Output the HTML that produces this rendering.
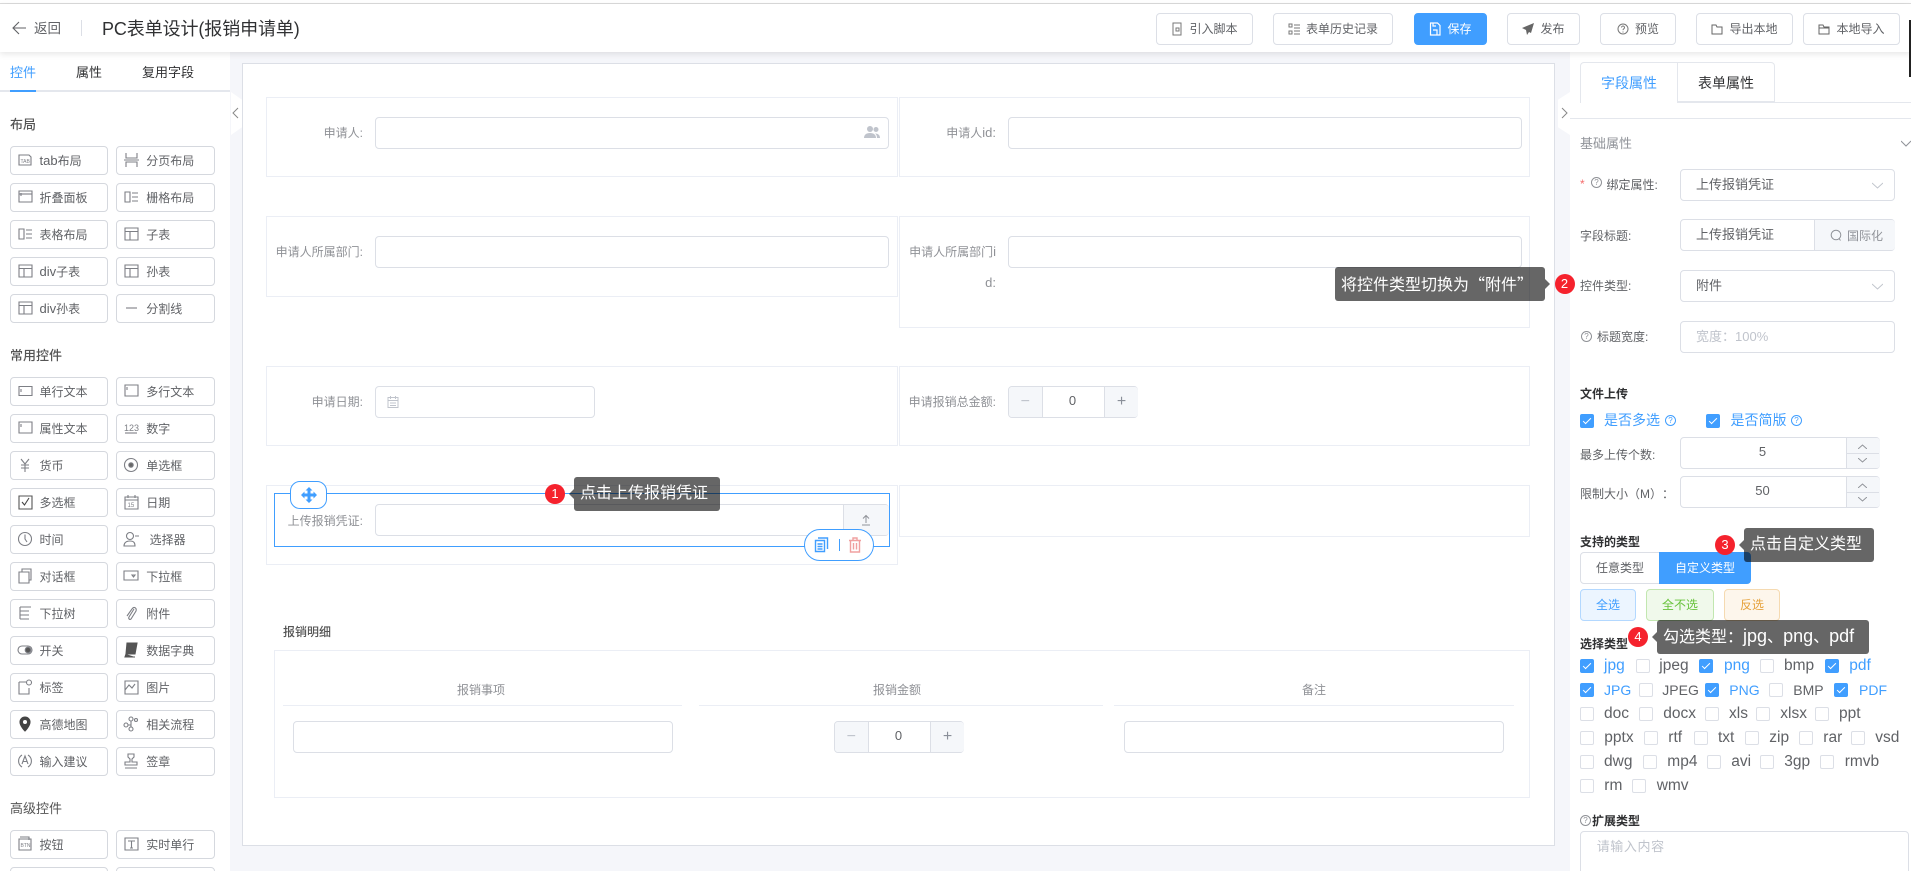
<!DOCTYPE html>
<html lang="zh-CN"><head><meta charset="utf-8"><title>PC表单设计</title>
<style>
html{margin:0;padding:0;width:1911px;height:871px;overflow:hidden}
body{margin:0;padding:0;width:1911px;height:871px;overflow:hidden;position:relative;background:#f5f6fa;font-family:"Liberation Sans","Noto Sans CJK SC",sans-serif;font-size:12px;color:#606266;text-spacing-trim:space-all}
.a,.t,.i,.b,.c,.g,.tip,.bd,.h,svg.s{position:absolute}
.t{white-space:nowrap;line-height:16px}
.i{border:1px solid #dcdfe6;border-radius:4px;background:#fff;box-sizing:border-box}
.cell{position:absolute;border:1px solid #ebeef5;box-sizing:border-box}
.g{height:31.4px;border:1px solid #dcdfe6;border-radius:4px;background:#fff;box-sizing:border-box;display:flex;align-items:center;justify-content:center;color:#606266;white-space:nowrap}
.g svg{margin-right:6px;flex:none}
.b{width:98.4px;height:29px;border:1px solid #d5d8de;border-radius:4px;background:#fff;box-sizing:border-box;color:#606266;line-height:28px;padding-left:29px;white-space:nowrap}
.b svg{position:absolute;left:6px;top:5px;width:16px;height:16px;fill:none;stroke:#7d7f85;stroke-width:1.1}
.b svg text{stroke:none;fill:#7d7f85}
.c1{left:9.5px}.c2{left:116.3px}
.sec{left:10px;color:#555;font-size:13px}
.lb{color:#8f9196;text-align:right}
.pl{color:#606266;font-size:13px}
.l{font-size:13px}
.c{width:14px;height:14px;border:1px solid #dcdfe6;border-radius:2px;background:#fff;box-sizing:border-box}
.c.on{background:#409eff;border-color:#409eff}
.c.on::after{content:"";position:absolute;left:4px;top:1px;width:3px;height:7px;border:solid #fff;border-width:0 1px 1px 0;transform:rotate(45deg)}
.k{font-size:15.5px;color:#606266}.k.on{color:#409eff}.k.u{font-size:14px}
.h{border:1px solid #8f9196;border-radius:50%;box-sizing:border-box;width:11px;height:11px;font-size:8px;line-height:9px;text-align:center;color:#8f9196}
.tip{background:rgba(0,0,0,.6);color:#fff;border-radius:3px;height:34px;line-height:33px;font-size:16px;box-sizing:border-box;padding-left:6px;white-space:nowrap}
.tip::before{content:"";position:absolute;left:-5px;top:12px;border:5px solid transparent;border-left:0;border-right-color:rgba(0,0,0,.6)}
.tip.r::before{left:auto;right:-5px;border-left:5px solid rgba(0,0,0,.6);border-right:0}
.q{font-family:"Noto Sans CJK SC",sans-serif}
.bd{width:20px;height:20px;border-radius:50%;background:#f5222d;color:#fff;font-size:13px;line-height:20px;text-align:center}
svg.ar{position:absolute;fill:none;stroke:#c0c4cc;stroke-width:1}
</style></head><body>
<svg width="0" height="0" style="position:absolute"><defs>
<symbol id="tbl" viewBox="0 0 16 16"><path d="M2 2h13v12H2zM2 5.5h13M7 5.5V14"/></symbol>
<symbol id="gr" viewBox="0 0 16 16"><path d="M2 3h5v10H2zM9 4h6M9 8h6M9 12h6"/></symbol>
<symbol id="inp" viewBox="0 0 16 16"><path d="M2 3.500h13v9H2zM4 6v3"/></symbol>
<symbol id="ml" viewBox="0 0 16 16"><path d="M2 2h13v11H2zM4 4v3"/></symbol>
</defs></svg>

<!-- header -->
<div class="a" style="left:0;top:0;width:1911px;height:4px;background:#fff;border-bottom:1px solid #dcdcdc;box-sizing:border-box"></div>
<div class="a" style="left:0;top:4px;width:1911px;height:48px;background:#fff;box-shadow:0 2px 6px rgba(0,0,0,.1);z-index:3">
<svg class="s" style="left:12px;top:17px" width="15" height="14" fill="none" stroke="#606266" stroke-width="1.1"><path d="M14 7H1M7 1L1 7l6 6"/></svg>
<span class="t" style="left:34px;top:17px;font-size:13.500px;color:#606266">返回</span>
<div class="a" style="left:81px;top:16px;width:1px;height:16px;background:#dcdfe6"></div>
<span class="t" style="left:102px;top:15px;font-size:18px;line-height:20px;letter-spacing:-.1px;color:#303133">PC表单设计(报销申请单)</span>
<div class="g" style="left:1156px;top:9.300px;width:97px"><svg width="12" height="14" fill="none" stroke="#777"><path d="M2 1h8v12H2zM5 6h3v3H5z"/></svg>引入脚本</div>
<div class="g" style="left:1273px;top:9.300px;width:120px"><svg width="12" height="12" fill="none" stroke="#777"><path d="M1 1h3v3H1zM1 8h3v3H1zM6 2h6M6 5h6M6 8h6M6 11h6"/></svg>表单历史记录</div>
<div class="g" style="left:1414px;top:9.300px;width:73px;background:#409eff;border-color:#409eff;color:#fff"><svg width="12" height="14" fill="none" stroke="#fff" stroke-width="1.2"><path d="M1.500 1h7l2.500 2.500V13h-9.500zM4 8h4v5M4 1v3h3"/></svg>保存</div>
<div class="g" style="left:1507px;top:9.300px;width:73px"><svg width="12" height="12" fill="#666"><path d="M12 0L0 5l4 2 1 5 2-3 2 1z"/></svg>发布</div>
<div class="g" style="left:1600px;top:9.300px;width:76px"><svg width="12" height="12" fill="none" stroke="#777"><circle cx="6" cy="6" r="5"/><path d="M4.500 4.500a1.500 1.500 0 1 1 2.300 1.300c-.6.400-.8.700-.8 1.300M6 8.500v1"/></svg>预览</div>
<div class="g" style="left:1696px;top:9.300px;width:97px"><svg width="12" height="12" fill="none" stroke="#666"><path d="M1 2h4l1 2h5v7H1z"/></svg>导出本地</div>
<div class="g" style="left:1803px;top:9.300px;width:97px"><svg width="12" height="12" fill="none" stroke="#666"><path d="M1 2h4l1 2h5v7H1zM1 5h10"/></svg>本地导入</div>
</div>
<div class="a" style="left:1909px;top:20px;width:2px;height:57px;background:#222;z-index:4"></div>

<!-- left panel -->
<div class="a" style="left:0;top:52px;width:230px;height:819px;background:#fff"></div>
<span class="t" style="left:10px;top:65px;font-size:13px;color:#409eff">控件</span>
<span class="t" style="left:76px;top:65px;font-size:13px;color:#303133">属性</span>
<span class="t" style="left:142px;top:65px;font-size:13px;color:#303133">复用字段</span>
<div class="a" style="left:0;top:90px;width:230px;height:2px;background:#e4e7ed"></div>
<div class="a" style="left:10px;top:90px;width:26px;height:2px;background:#409eff"></div>
<span class="t sec" style="top:117px;font-weight:500">布局</span>
<span class="t sec" style="top:348px;font-weight:500">常用控件</span>
<span class="t sec" style="top:801px">高级控件</span>

<div class="b c1" style="top:146px"><svg viewBox="0 0 16 16"><path d="M2 3h10l2 2v8H2z"/><text x="3.500" y="11" font-size="5">TAB</text></svg><span class="l">tab</span>布局</div>
<div class="b c2" style="top:146px"><svg viewBox="0 0 16 16"><path d="M3 1v5h11V1M3 15v-5h11v5M1 8h15"/></svg>分页布局</div>
<div class="b c1" style="top:183px"><svg><use href="#ml"/><path d="M2 5h13"/></svg>折叠面板</div>
<div class="b c2" style="top:183px"><svg><use href="#gr"/></svg>栅格布局</div>
<div class="b c1" style="top:220px"><svg><use href="#gr"/></svg>表格布局</div>
<div class="b c2" style="top:220px"><svg><use href="#tbl"/></svg>子表</div>
<div class="b c1" style="top:257px"><svg><use href="#tbl"/></svg><span class="l">div</span>子表</div>
<div class="b c2" style="top:257px"><svg><use href="#tbl"/></svg>孙表</div>
<div class="b c1" style="top:294px"><svg><use href="#tbl"/></svg><span class="l">div</span>孙表</div>
<div class="b c2" style="top:294px"><svg viewBox="0 0 16 16"><path d="M3 8h11"/></svg>分割线</div>

<div class="b c1" style="top:377px"><svg><use href="#inp"/></svg>单行文本</div>
<div class="b c2" style="top:377px"><svg><use href="#ml"/></svg>多行文本</div>
<div class="b c1" style="top:414px"><svg><use href="#ml"/></svg>属性文本</div>
<div class="b c2" style="top:414px"><svg viewBox="0 0 16 16"><text x="1" y="11" font-size="9">123</text><path d="M2 13h12"/></svg>数字</div>
<div class="b c1" style="top:451px"><svg viewBox="0 0 16 16"><path d="M4 2l4 5 4-5M8 7v8M4 8h8M4 11h8"/></svg>货币</div>
<div class="b c2" style="top:451px"><svg viewBox="0 0 16 16"><circle cx="8" cy="8" r="6.500"/><circle cx="8" cy="8" r="2.200" fill="#666"/></svg>单选框</div>
<div class="b c1" style="top:488px"><svg viewBox="0 0 16 16"><path d="M2 2h13v13H2z" stroke="#555"/><path d="M5 8l2.500 3L12 4" stroke="#444"/></svg>多选框</div>
<div class="b c2" style="top:488px"><svg viewBox="0 0 16 16"><path d="M2 3h13v12H2zM2 6h13M5 1v3M12 1v3"/><text x="4.500" y="13" font-size="6">15</text></svg>日期</div>
<div class="b c1" style="top:525px"><svg viewBox="0 0 16 16"><circle cx="8" cy="8" r="6.500"/><path d="M8 3.500V8l2 3"/></svg>时间</div>
<div class="b c2" style="top:525px"><svg viewBox="0 0 16 16"><circle cx="7" cy="5" r="3.500"/><path d="M1 15c0-3 2-5 6-5s5 2 5 5zM12 5h4"/></svg>&nbsp;选择器</div>
<div class="b c1" style="top:562px"><svg viewBox="0 0 16 16"><path d="M2 4h10v11H2zM5 4V1h9v11h-2"/></svg>对话框</div>
<div class="b c2" style="top:562px"><svg viewBox="0 0 16 16"><path d="M1 3h14v9H1zM9 7h3l-1.500 2z"/></svg>下拉框</div>
<div class="b c1" style="top:599px"><svg viewBox="0 0 16 16"><path d="M3 2h11M3 2v12M3 6h9M3 10h9M3 14h9"/></svg>下拉树</div>
<div class="b c2" style="top:599px"><svg viewBox="0 0 16 16"><path d="M11 4l-5 8c-1 2 1 3 2 2l5-8c1-3-2-5-4-2L4 11"/></svg>附件</div>
<div class="b c1" style="top:636px"><svg viewBox="0 0 16 16"><rect x="1" y="4" width="14" height="8" rx="4"/><circle cx="11" cy="8" r="2.800" fill="#555"/></svg>开关</div>
<div class="b c2" style="top:636px"><svg viewBox="0 0 16 16"><path d="M4 1h10l-2 11H3zM3 12l-1 3h10" fill="#555" stroke="#555"/></svg>数据字典</div>
<div class="b c1" style="top:673px"><svg viewBox="0 0 16 16"><path d="M2 3h7M2 3v12h10V9"/><circle cx="12" cy="3.500" r="2.500"/></svg>标签</div>
<div class="b c2" style="top:673px"><svg viewBox="0 0 16 16"><path d="M2 2h13v13H2zM2 11l4-5 3 3 3-4"/></svg>图片</div>
<div class="b c1" style="top:710px"><svg viewBox="0 0 16 16"><path d="M8 1a5 5 0 0 1 5 5c0 4-5 9-5 9S3 10 3 6a5 5 0 0 1 5-5z" fill="#444" stroke="#444"/><circle cx="8" cy="6" r="2" fill="#fff" stroke="none"/></svg>高德地图</div>
<div class="b c2" style="top:710px"><svg viewBox="0 0 16 16"><circle cx="8" cy="3" r="2"/><circle cx="3" cy="9" r="2"/><circle cx="8" cy="13" r="2"/><circle cx="13" cy="4" r="1.500"/><path d="M8 5v6M5 9h3"/></svg>相关流程</div>
<div class="b c1" style="top:747px"><svg viewBox="0 0 16 16"><path d="M5 2a7 7 0 0 0 0 12M11 2a7 7 0 0 1 0 12M5 11l3-8 3 8M6 8.500h4"/></svg>输入建议</div>
<div class="b c2" style="top:747px"><svg viewBox="0 0 16 16"><path d="M5 1h6v3l-2 2v3h5v3H2V9h5V6L5 4zM2 15h12"/></svg>签章</div>
<div class="b c1" style="top:830px"><svg viewBox="0 0 16 16"><path d="M3 1h9v3M2 3h12v11H2z"/><text x="3.500" y="11" font-size="5">BTN</text></svg>按钮</div>
<div class="b c2" style="top:830px"><svg viewBox="0 0 16 16"><path d="M2 2h13v12H2zM5 5h7M8.500 5v7M7 12h3"/></svg>实时单行</div>
<div class="b c1" style="top:867px"></div><div class="b c2" style="top:867px"></div>

<!-- collapse handles -->
<div class="a" style="left:231px;top:92px;width:11px;height:43px;background:#fff;clip-path:polygon(0 0,100% 18%,100% 82%,0 100%)"></div>
<svg class="ar" style="left:232px;top:107px;stroke:#888" width="7" height="12"><path d="M6 1L1 6l5 5"/></svg>
<div class="a" style="left:1558px;top:92px;width:12px;height:43px;background:#fff;clip-path:polygon(0 18%,100% 0,100% 100%,0 82%)"></div>
<svg class="ar" style="left:1561px;top:107px;stroke:#888" width="7" height="12"><path d="M1 1l5 5-5 5"/></svg>

<!-- canvas -->
<div class="a" style="left:242px;top:63px;width:1313px;height:783px;background:#fff;border:1px solid #dcdfe6;box-sizing:border-box"></div>
<div class="cell" style="left:266px;top:97px;width:632px;height:80px"></div>
<div class="cell" style="left:899px;top:97px;width:631px;height:80px"></div>
<div class="cell" style="left:266px;top:216px;width:632px;height:81px"></div>
<div class="cell" style="left:899px;top:216px;width:631px;height:112px"></div>
<div class="cell" style="left:266px;top:366px;width:632px;height:80px"></div>
<div class="cell" style="left:899px;top:366px;width:631px;height:80px"></div>
<div class="cell" style="left:266px;top:485px;width:632px;height:79.500px"></div>
<div class="cell" style="left:899px;top:485px;width:631px;height:51.500px"></div>

<span class="t lb" style="left:250px;top:125px;width:113px">申请人:</span>
<div class="i" style="left:375px;top:117.300px;width:514px;height:31.400px"></div>
<svg class="s" style="left:864px;top:125px" width="16" height="14" fill="#c0c4cc"><circle cx="6" cy="4" r="3"/><circle cx="12" cy="4.500" r="2.500"/><path d="M0 13c0-3 2-5 6-5s6 2 6 5zM13 13c0-2-.5-3.500-2-4.500 3 0 5 1.500 5 4.500z"/></svg>
<span class="t lb" style="left:882px;top:125px;width:114px">申请人<span class="l">id:</span></span>
<div class="i" style="left:1008px;top:117.300px;width:514px;height:31.400px"></div>

<span class="t lb" style="left:250px;top:244px;width:113px">申请人所属部门:</span>
<div class="i" style="left:375px;top:236.300px;width:514px;height:31.400px"></div>
<span class="t lb" style="left:882px;top:244px;width:114px">申请人所属部门<span class="l">i</span></span>
<span class="t lb" style="left:882px;top:275px;width:114px"><span class="l">d:</span></span>
<div class="i" style="left:1008px;top:236.300px;width:514px;height:31.400px"></div>

<span class="t lb" style="left:250px;top:394px;width:113px">申请日期:</span>
<div class="i" style="left:375px;top:386.400px;width:220px;height:31.400px"></div>
<svg class="s" style="left:387px;top:395px" width="12" height="13" fill="none" stroke="#c0c4cc"><path d="M1 2.500h10v10H1zM1 5.500h10M3.500 1v3M8.500 1v3M3 8h6M3 10.500h6"/></svg>
<span class="t lb" style="left:882px;top:394px;width:114px">申请报销总金额:</span>
<div class="i" style="left:1008px;top:386.400px;width:130px;height:31.400px"></div>
<div class="a" style="left:1009px;top:387.400px;width:32.500px;height:29.400px;background:#f5f7fa;border-right:1px solid #dcdfe6;border-radius:3px 0 0 3px;color:#c0c4cc;font-size:16px;line-height:29px;text-align:center">−</div>
<div class="a" style="left:1104px;top:387.400px;width:33px;height:29.400px;background:#f5f7fa;border-left:1px solid #dcdfe6;border-radius:0 3px 3px 0;color:#8a8f99;font-size:16px;line-height:29px;text-align:center">+</div>
<span class="t" style="left:1041.500px;top:393px;width:62px;text-align:center;font-size:13px;color:#606266">0</span>

<!-- selected field -->
<div class="a" style="left:274.400px;top:493.300px;width:616px;height:53.500px;border:1px solid #409eff;box-sizing:border-box"></div>
<span class="t lb" style="left:250px;top:513px;width:113px">上传报销凭证:</span>
<div class="i" style="left:375px;top:504.300px;width:514px;height:31.400px"></div>
<div class="a" style="left:843px;top:505.300px;width:45px;height:29.400px;background:#f5f7fa;border-left:1px solid #dcdfe6;border-radius:0 3px 3px 0"></div>
<svg class="s" style="left:860px;top:514px" width="12" height="12" fill="none" stroke="#909399"><path d="M6 9V2M3 4.500L6 1.500l3 3M2 11h8"/></svg>
<div class="a" style="left:290.400px;top:481.300px;width:37px;height:27.500px;background:#fff;border:1px solid #409eff;border-radius:10px;box-sizing:border-box"></div>
<svg class="s" style="left:301px;top:487px" width="16" height="16" fill="#409eff"><path d="M8 0l3.500 3.500H9.500v3h3V4.500L16 8l-3.500 3.500V9.500h-3v3h2L8 16l-3.500-3.500h2v-3h-3v2L0 8l3.500-3.500v2h3v-3h-2z"/></svg>
<div class="a" style="left:804px;top:529.300px;width:70px;height:31.400px;background:#fff;border:1px solid #409eff;border-radius:16px;box-sizing:border-box"></div>
<svg class="s" style="left:814px;top:537px" width="15" height="16" fill="none" stroke="#409eff" stroke-width="1.400"><path d="M1.500 3.500h9v11h-9zM4 1h9.500v11M3.500 7h5M3.500 9.500h5M3.500 12h5"/></svg>
<div class="a" style="left:839px;top:539px;width:1px;height:12px;background:#409eff"></div>
<svg class="s" style="left:848px;top:537px" width="14" height="16" fill="none" stroke="#f0a0a0" stroke-width="1.400"><path d="M1 3.500h12M5 3.500V1h4v2.500M2.500 3.500v11.500h9V3.500M5.500 6v6.500M8.500 6v6.500"/></svg>

<!-- detail table -->
<span class="t" style="left:283px;top:624px;color:#555;font-weight:500">报销明细</span>
<div class="cell" style="left:274px;top:650.300px;width:1256px;height:148px"></div>
<span class="t lb" style="left:283px;top:682px;width:396px;text-align:center">报销事项</span>
<span class="t lb" style="left:699px;top:682px;width:396px;text-align:center">报销金额</span>
<span class="t lb" style="left:1114px;top:682px;width:400px;text-align:center">备注</span>
<div class="a" style="left:283px;top:705px;width:399.400px;height:1px;background:#ebeef5"></div>
<div class="a" style="left:699px;top:705px;width:404px;height:1px;background:#ebeef5"></div>
<div class="a" style="left:1114px;top:705px;width:400px;height:1px;background:#ebeef5"></div>
<div class="i" style="left:293px;top:721.300px;width:380px;height:31.400px"></div>
<div class="i" style="left:1124px;top:721.300px;width:380px;height:31.400px"></div>
<div class="i" style="left:834px;top:721.300px;width:130px;height:31.400px"></div>
<div class="a" style="left:835px;top:722.300px;width:32.500px;height:29.400px;background:#f5f7fa;border-right:1px solid #dcdfe6;border-radius:3px 0 0 3px;color:#c0c4cc;font-size:16px;line-height:29px;text-align:center">−</div>
<div class="a" style="left:930px;top:722.300px;width:33px;height:29.400px;background:#f5f7fa;border-left:1px solid #dcdfe6;border-radius:0 3px 3px 0;color:#8a8f99;font-size:16px;line-height:29px;text-align:center">+</div>
<span class="t" style="left:867.500px;top:728px;width:62px;text-align:center;font-size:13px;color:#606266">0</span>

<!-- right panel -->
<div class="a" style="left:1570px;top:52px;width:341px;height:819px;background:#fff"></div>
<div class="a" style="left:1580px;top:62.300px;width:98px;height:41px;border:1px solid #e4e7ed;border-bottom:0;border-radius:4px 0 0 0;box-sizing:border-box;background:#fff"></div>
<div class="a" style="left:1678px;top:62.300px;width:97px;height:40px;border:1px solid #e4e7ed;border-left:0;border-radius:0 4px 0 0;box-sizing:border-box"></div>
<div class="a" style="left:1678px;top:102px;width:233px;height:1px;background:#e4e7ed"></div>
<div class="a" style="left:1570px;top:118px;width:341px;height:1px;background:#e4e7ed"></div>
<span class="t" style="left:1601px;top:75px;font-size:14px;color:#409eff">字段属性</span>
<span class="t" style="left:1698px;top:75px;font-size:14px;color:#303133">表单属性</span>
<span class="t" style="left:1580px;top:136px;font-size:13px;color:#909399">基础属性</span>
<svg class="ar" style="left:1901px;top:140px;stroke:#909399" width="10" height="7"><path d="M0 1l5 5 5-5"/></svg>

<span class="t" style="left:1580px;top:176px;color:#f56c6c">*</span>
<span class="h" style="left:1591px;top:177px">?</span>
<span class="t" style="left:1606.500px;top:177px;color:#606266">绑定属性:</span>
<div class="i" style="left:1680.400px;top:169.300px;width:214.200px;height:31.400px"></div>
<span class="t pl" style="left:1696px;top:177px">上传报销凭证</span>
<svg class="ar" style="left:1872px;top:182px" width="11" height="7"><path d="M0 1l5.500 5L11 1"/></svg>

<span class="t" style="left:1580px;top:228px;color:#606266">字段标题:</span>
<div class="i" style="left:1680.400px;top:219.300px;width:214.200px;height:31.400px"></div>
<div class="a" style="left:1814px;top:220.300px;width:79.600px;height:29.400px;background:#f5f7fa;border-left:1px solid #dcdfe6;border-radius:0 3px 3px 0"></div>
<span class="t pl" style="left:1696px;top:227px">上传报销凭证</span>
<svg class="s" style="left:1830px;top:229px" width="12" height="13" fill="none" stroke="#909399"><circle cx="6" cy="6" r="4.800"/><path d="M9 9.500l1.500 2"/></svg>
<span class="t" style="left:1847px;top:228px;color:#909399">国际化</span>

<span class="t" style="left:1580px;top:278px;color:#606266">控件类型:</span>
<div class="i" style="left:1680.400px;top:270.300px;width:214.200px;height:31.400px"></div>
<span class="t pl" style="left:1696px;top:278px">附件</span>
<svg class="ar" style="left:1872px;top:283px" width="11" height="7"><path d="M0 1l5.500 5L11 1"/></svg>

<span class="h" style="left:1581px;top:331px">?</span>
<span class="t" style="left:1597px;top:329px;color:#606266">标题宽度:</span>
<div class="i" style="left:1680.400px;top:321.300px;width:214.200px;height:31.400px"></div>
<span class="t" style="left:1696px;top:329px;font-size:13px;color:#c0c4cc">宽度：100%</span>

<span class="t" style="left:1580px;top:386px;font-weight:700;color:#303133">文件上传</span>
<div class="c on" style="left:1580px;top:414px"></div>
<span class="t" style="left:1604px;top:412px;font-size:14px;color:#409eff">是否多选</span>
<span class="h" style="left:1665px;top:415px;border-color:#409eff;color:#409eff">?</span>
<div class="c on" style="left:1706px;top:414px"></div>
<span class="t" style="left:1730.500px;top:412px;font-size:14px;color:#409eff">是否简版</span>
<span class="h" style="left:1791px;top:415px;border-color:#409eff;color:#409eff">?</span>

<span class="t" style="left:1580px;top:447px;color:#606266">最多上传个数:</span>
<div class="i" style="left:1680.300px;top:437.300px;width:199.400px;height:31.400px"></div>
<div class="a" style="left:1846.300px;top:438.300px;width:32.400px;height:29.400px;background:#f5f7fa;border-left:1px solid #dcdfe6;border-radius:0 3px 3px 0"></div>
<div class="a" style="left:1847px;top:453px;width:32px;height:1px;background:#dcdfe6"></div>
<svg class="ar" style="left:1858px;top:444px;stroke:#909399" width="9" height="5"><path d="M0 5l4.500-4L9 5"/></svg>
<svg class="ar" style="left:1858px;top:458px;stroke:#909399" width="9" height="5"><path d="M0 0l4.500 4L9 0"/></svg>
<span class="t" style="left:1680px;top:444px;width:165px;text-align:center;font-size:13px;color:#606266">5</span>

<span class="t" style="left:1580px;top:486px;color:#606266">限制大小（M）：</span>
<div class="i" style="left:1680.300px;top:476.300px;width:199.400px;height:31.400px"></div>
<div class="a" style="left:1846.300px;top:477.300px;width:32.400px;height:29.400px;background:#f5f7fa;border-left:1px solid #dcdfe6;border-radius:0 3px 3px 0"></div>
<div class="a" style="left:1847px;top:492px;width:32px;height:1px;background:#dcdfe6"></div>
<svg class="ar" style="left:1858px;top:483px;stroke:#909399" width="9" height="5"><path d="M0 5l4.500-4L9 5"/></svg>
<svg class="ar" style="left:1858px;top:497px;stroke:#909399" width="9" height="5"><path d="M0 0l4.500 4L9 0"/></svg>
<span class="t" style="left:1680px;top:483px;width:165px;text-align:center;font-size:13px;color:#606266">50</span>

<span class="t" style="left:1580px;top:534px;font-weight:700;color:#303133">支持的类型</span>
<div class="g" style="left:1580px;top:552.300px;width:80px;border-radius:4px 0 0 4px">任意类型</div>
<div class="g" style="left:1659px;top:552.300px;width:92px;background:#409eff;border-color:#409eff;color:#fff;border-radius:0 4px 4px 0">自定义类型</div>
<div class="g" style="left:1580px;top:589.300px;width:56px;background:#ecf5ff;border-color:#b3d8ff;color:#409eff">全选</div>
<div class="g" style="left:1646px;top:589.300px;width:68px;background:#f0f9eb;border-color:#c2e7b0;color:#67c23a">全不选</div>
<div class="g" style="left:1724px;top:589.300px;width:56px;background:#fdf6ec;border-color:#f5dab1;color:#e6a23c">反选</div>
<span class="t" style="left:1580px;top:636px;font-weight:700;color:#303133">选择类型</span>

<div class="c on" style="left:1580px;top:659.300px"></div><span class="t k on" style="left:1604px;top:658px">jpg</span>
<div class="c" style="left:1636px;top:659.300px"></div><span class="t k" style="left:1659.300px;top:658px">jpeg</span>
<div class="c on" style="left:1699px;top:659.300px"></div><span class="t k on" style="left:1724px;top:658px">png</span>
<div class="c" style="left:1760px;top:659.300px"></div><span class="t k" style="left:1784px;top:658px">bmp</span>
<div class="c on" style="left:1825px;top:659.300px"></div><span class="t k on" style="left:1849.300px;top:658px">pdf</span>

<div class="c on" style="left:1580px;top:683px"></div><span class="t k u on" style="left:1604px;top:682px">JPG</span>
<div class="c" style="left:1639px;top:683px"></div><span class="t k u" style="left:1662.300px;top:682px">JPEG</span>
<div class="c on" style="left:1705px;top:683px"></div><span class="t k u on" style="left:1729.300px;top:682px">PNG</span>
<div class="c" style="left:1769px;top:683px"></div><span class="t k u" style="left:1793.300px;top:682px">BMP</span>
<div class="c on" style="left:1834px;top:683px"></div><span class="t k u on" style="left:1859px;top:682px">PDF</span>

<div class="c" style="left:1580px;top:707px"></div><span class="t k" style="left:1604px;top:706px">doc</span>
<div class="c" style="left:1639px;top:707px"></div><span class="t k" style="left:1663.300px;top:706px">docx</span>
<div class="c" style="left:1705px;top:707px"></div><span class="t k" style="left:1729px;top:706px">xls</span>
<div class="c" style="left:1756px;top:707px"></div><span class="t k" style="left:1780.300px;top:706px">xlsx</span>
<div class="c" style="left:1815px;top:707px"></div><span class="t k" style="left:1839px;top:706px">ppt</span>

<div class="c" style="left:1580px;top:731px"></div><span class="t k" style="left:1604.300px;top:730px">pptx</span>
<div class="c" style="left:1644px;top:731px"></div><span class="t k" style="left:1668.300px;top:730px">rtf</span>
<div class="c" style="left:1694px;top:731px"></div><span class="t k" style="left:1718px;top:730px">txt</span>
<div class="c" style="left:1745px;top:731px"></div><span class="t k" style="left:1769.300px;top:730px">zip</span>
<div class="c" style="left:1799px;top:731px"></div><span class="t k" style="left:1823.300px;top:730px">rar</span>
<div class="c" style="left:1851px;top:731px"></div><span class="t k" style="left:1875.300px;top:730px">vsd</span>

<div class="c" style="left:1580px;top:755px"></div><span class="t k" style="left:1604px;top:754px">dwg</span>
<div class="c" style="left:1643px;top:755px"></div><span class="t k" style="left:1667.300px;top:754px">mp4</span>
<div class="c" style="left:1707px;top:755px"></div><span class="t k" style="left:1731.300px;top:754px">avi</span>
<div class="c" style="left:1760px;top:755px"></div><span class="t k" style="left:1784.300px;top:754px">3gp</span>
<div class="c" style="left:1820px;top:755px"></div><span class="t k" style="left:1844.700px;top:754px">rmvb</span>

<div class="c" style="left:1580px;top:779px"></div><span class="t k" style="left:1604.300px;top:778px">rm</span>
<div class="c" style="left:1632px;top:779px"></div><span class="t k" style="left:1656.700px;top:778px">wmv</span>

<span class="h" style="left:1580px;top:815px">?</span>
<span class="t" style="left:1592px;top:813px;font-weight:700;color:#303133">扩展类型</span>
<div class="i" style="left:1580px;top:831.300px;width:329px;height:60px"></div>
<span class="t" style="left:1596.700px;top:839px;font-size:13px;letter-spacing:.6px;color:#c0c4cc">请输入内容</span>

<!-- tooltips -->
<div class="bd" style="left:545px;top:484px;z-index:9">1</div>
<div class="tip" style="left:574px;top:477px;width:146px;z-index:9">点击上传报销凭证</div>
<div class="tip r" style="left:1335px;top:267px;width:210px;z-index:9">将控件类型切换为<span class="q">“</span>附件<span class="q">”</span></div>
<div class="bd" style="left:1554.500px;top:274px;z-index:9">2</div>
<div class="bd" style="left:1715px;top:535px;z-index:9">3</div>
<div class="tip" style="left:1744px;top:528px;width:130px;z-index:9">点击自定义类型</div>
<div class="bd" style="left:1628px;top:627px;z-index:9">4</div>
<div class="tip" style="left:1657px;top:620px;width:212px;z-index:9">勾选类型：<span style="font-size:18px">jpg</span>、<span style="font-size:18px">png</span>、<span style="font-size:18px">pdf</span></div>
</body></html>
